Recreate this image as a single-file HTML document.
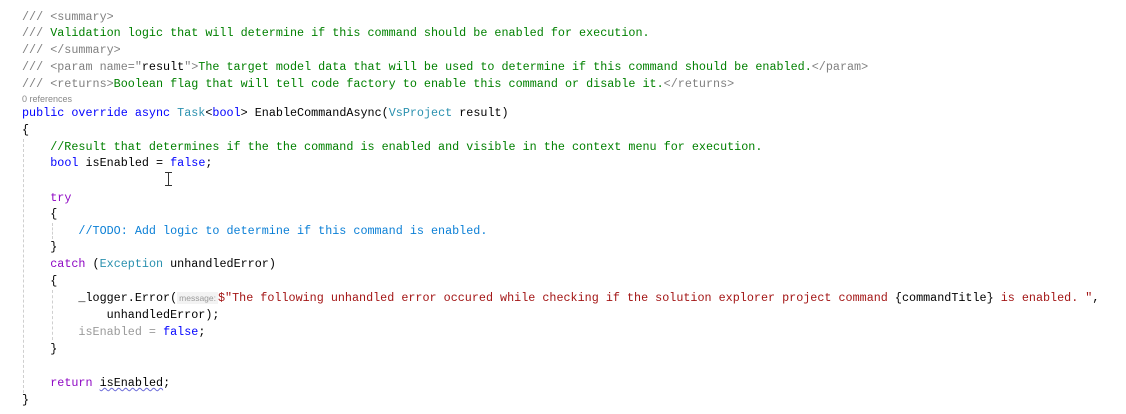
<!DOCTYPE html>
<html><head><style>
body{margin:0;width:1126px;height:414px;background:#fff;overflow:hidden;position:relative;font-family:"Liberation Mono",monospace;font-size:11.75px;}
.l{position:absolute;left:22px;white-space:pre;line-height:16px;height:16px;color:#000;}
.g{color:#808080}.c{color:#008000}.k{color:#0000ff}.t{color:#2b91af}.s{color:#a31515}.p{color:#8f08c4}.f{color:#9a9a9a}
.todo{color:#0a7fd6}
.lens{position:absolute;left:22px;top:94px;font-family:"Liberation Sans",sans-serif;font-size:9px;color:#888;}
.hint{font-family:"Liberation Sans",sans-serif;font-size:8.5px;color:#999;background:#f3f3f3;padding:1px 2px;}
.guide{position:absolute;width:0;border-left:1px dashed #cfcfcf;}
.sq{text-decoration:underline wavy #6a6ad8;text-decoration-thickness:1px;}
</style></head><body>
<div class="l g" style="top:9px">/// &lt;summary&gt;</div>
<div class="l" style="top:25px"><span class="g">///</span><span class="c"> Validation logic that will determine if this command should be enabled for execution.</span></div>
<div class="l g" style="top:42px">/// &lt;/summary&gt;</div>
<div class="l" style="top:59px"><span class="g">/// &lt;param name="</span>result<span class="g">"&gt;</span><span class="c">The target model data that will be used to determine if this command should be enabled.</span><span class="g">&lt;/param&gt;</span></div>
<div class="l" style="top:76px"><span class="g">/// &lt;returns&gt;</span><span class="c">Boolean flag that will tell code factory to enable this command or disable it.</span><span class="g">&lt;/returns&gt;</span></div>
<div class="lens">0 references</div>
<div class="l" style="top:105px"><span class="k">public override async </span><span class="t">Task</span>&lt;<span class="k">bool</span>&gt; EnableCommandAsync(<span class="t">VsProject</span> result)</div>
<div class="l" style="top:122px">{</div>
<div class="l c" style="top:139px">    //Result that determines if the the command is enabled and visible in the context menu for execution.</div>
<div class="l" style="top:155px">    <span class="k">bool</span> isEnabled = <span class="k">false</span>;</div>
<div class="l" style="top:190px">    <span class="p">try</span></div>
<div class="l" style="top:206px">    {</div>
<div class="l todo" style="top:223px">        //TODO: Add logic to determine if this command is enabled.</div>
<div class="l" style="top:239px">    }</div>
<div class="l" style="top:256px">    <span class="p">catch</span> (<span class="t">Exception</span> unhandledError)</div>
<div class="l" style="top:273px">    {</div>
<div class="l" style="top:290px">        _logger.Error(<span class="hint">message:</span><span class="s">$"The following unhandled error occured while checking if the solution explorer project command </span>{commandTitle}<span class="s"> is enabled. "</span>,</div>
<div class="l" style="top:307px">            unhandledError);</div>
<div class="l" style="top:324px">        <span class="f">isEnabled =</span> <span class="k">false</span>;</div>
<div class="l" style="top:341px">    }</div>
<div class="l" style="top:375px">    <span class="p">return</span> <span class="sq">isEnabled</span>;</div>
<div class="l" style="top:392px">}</div>
<div class="guide" style="left:23px;top:139px;height:254px"></div>
<div class="guide" style="left:52px;top:223px;height:16px"></div>
<div class="guide" style="left:52px;top:290px;height:50px"></div>
<div style="position:absolute;left:168px;top:172px;width:1px;height:13px;background:#333"></div>
<div style="position:absolute;left:165px;top:172px;width:7px;height:1px;background:#333"></div>
<div style="position:absolute;left:165px;top:185px;width:7px;height:1px;background:#333"></div>
</body></html>
